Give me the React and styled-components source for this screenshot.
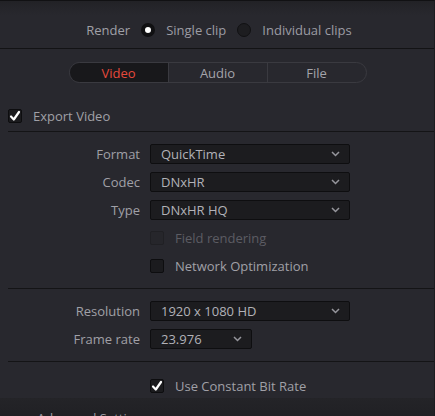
import React from "react";
import styled, { createGlobalStyle } from "styled-components";

const GlobalStyle = createGlobalStyle`
  html, body {
    margin: 0;
    padding: 0;
    background: #28282e;
  }
  body {
    font-family: "Open Sans", "Noto Sans", sans-serif;
    font-size: 13px;
    color: #a0a0a7;
  }
`;

const Panel = styled.div`
  width: 435px;
  height: 416px;
  overflow: hidden;
  box-sizing: border-box;
  background: #28282e;
  border-top: 1px solid #111113;
  border-right: 1px solid #1c1c20;
  display: flex;
  flex-direction: column;

  & > * {
    flex-shrink: 0;
  }
`;

const RenderBar = styled.div`
  height: 48px;
  box-sizing: border-box;
  display: flex;
  align-items: center;
  justify-content: center;
  gap: 11px;
  background: linear-gradient(#222226, #28282e 14px);
  border-bottom: 1px solid #131315;
  padding: 10px 0 0 4px;
`;

const RadioOption = styled.label`
  display: flex;
  align-items: center;
  gap: 11px;
  color: #9c9ca4;
`;

const RadioDot = styled.span`
  width: 14px;
  height: 14px;
  border-radius: 50%;
  box-sizing: border-box;
  background: ${(p) => (p.checked ? "#ffffff" : "#1d1d20")};
  border: ${(p) => (p.checked ? "4px solid #101012" : "1px solid #111113")};
`;

const Tabs = styled.div`
  align-self: center;
  margin-top: 13px;
  margin-left: 1px;
  width: 298px;
  height: 21px;
  display: flex;
  box-sizing: border-box;
  border: 1px solid #3a3a40;
  border-radius: 11px;
  overflow: hidden;
`;

const Tab = styled.div`
  flex: 1;
  display: flex;
  align-items: center;
  justify-content: center;
  background: ${(p) => (p.active ? "#18181b" : "transparent")};
  color: ${(p) => (p.active ? "#e5493b" : "#a4a4ab")};
  border-left: ${(p) => (p.first ? "none" : "1px solid #3a3a40")};
`;

const ExportRow = styled.div`
  margin-top: 23px;
  height: 20px;
  padding-left: 8px;
  display: flex;
  align-items: center;
  gap: 11px;
`;

const Section = styled.div`
  margin-left: 8px;
  margin-top: ${(p) => p.top || 0}px;
  border-top: 1px solid #141416;
  padding: ${(p) => p.pad || "12px 0 12px 0"};
  display: flex;
  flex-direction: column;
  gap: 8px;
`;

const Row = styled.div`
  height: 20px;
  display: grid;
  grid-template-columns: 132px auto;
  column-gap: 10px;
  align-items: center;
`;

const Label = styled.span`
  text-align: right;
  color: #a0a0a7;
`;

const Select = styled.div`
  grid-column: 2;
  width: ${(p) => p.width}px;
  height: 20px;
  box-sizing: border-box;
  background: #1c1c1f;
  border: 1px solid #0e0e10;
  border-radius: 2px;
  padding: 0 9px 0 10px;
  display: flex;
  align-items: center;
  justify-content: space-between;
  color: #b2b2b8;
`;

const CheckLine = styled.label`
  grid-column: 2;
  display: flex;
  align-items: center;
  gap: 11px;
  color: ${(p) => (p.disabled ? "#5c5c63" : "#a0a0a7")};
`;

const Box = styled.span`
  width: 14px;
  height: 14px;
  box-sizing: border-box;
  border-radius: 2px;
  background: ${(p) => (p.disabled ? "#26262b" : "#1b1b1e")};
  border: 1px solid ${(p) => (p.disabled ? "#202024" : "#0d0d0f")};
  display: flex;
  align-items: center;
  justify-content: center;
`;

const Footer = styled.div`
  flex: 1;
  margin-top: 2px;
  background: linear-gradient(#242428, #1e1e22);
  padding-left: 37px;
  padding-top: 11px;
  color: #9a9aa1;
`;

const Chevron = () => (
  <svg width="9" height="6" viewBox="0 0 9 6">
    <path d="M1 1 L4.5 4.5 L8 1" fill="none" stroke="#96969c" strokeWidth="1.5" />
  </svg>
);

const Check = () => (
  <svg width="12" height="12" viewBox="0 0 12 12">
    <path d="M2 6.5 L4.8 9.5 L10 2" fill="none" stroke="#ffffff" strokeWidth="2.2" strokeLinecap="round" strokeLinejoin="round" />
  </svg>
);

const Checkbox = ({ checked, disabled, children }) => (
  <CheckLine disabled={disabled}>
    <Box disabled={disabled}>{checked && <Check />}</Box>
    {children}
  </CheckLine>
);

const Dropdown = ({ label, value, width }) => (
  <Row>
    <Label>{label}</Label>
    <Select width={width}>
      <span>{value}</span>
      <Chevron />
    </Select>
  </Row>
);

const App = () => {
  return (
    <>
      <GlobalStyle />
      <Panel>
        <RenderBar>
          <span>Render</span>
          <RadioOption>
            <RadioDot checked />
            Single clip
          </RadioOption>
          <RadioOption>
            <RadioDot />
            Individual clips
          </RadioOption>
        </RenderBar>

        <Tabs>
          <Tab active first>Video</Tab>
          <Tab>Audio</Tab>
          <Tab>File</Tab>
        </Tabs>

        <ExportRow>
          <Box>
            <Check />
          </Box>
          <span>Export Video</span>
        </ExportRow>

        <Section top={5}>
          <Dropdown label="Format" value="QuickTime" width={200} />
          <Dropdown label="Codec" value="DNxHR" width={200} />
          <Dropdown label="Type" value="DNxHR HQ" width={200} />
          <Row>
            <Checkbox disabled>Field rendering</Checkbox>
          </Row>
          <Row>
            <Checkbox>Network Optimization</Checkbox>
          </Row>
        </Section>

        <Section>
          <Dropdown label="Resolution" value="1920 x 1080 HD" width={200} />
          <Dropdown label="Frame rate" value="23.976" width={102} />
        </Section>

        <Section pad="14px 0 0 0">
          <Row>
            <Checkbox checked>Use Constant Bit Rate</Checkbox>
          </Row>
        </Section>

        <Footer>Advanced Settings</Footer>
      </Panel>
    </>
  );
};

export default App;
